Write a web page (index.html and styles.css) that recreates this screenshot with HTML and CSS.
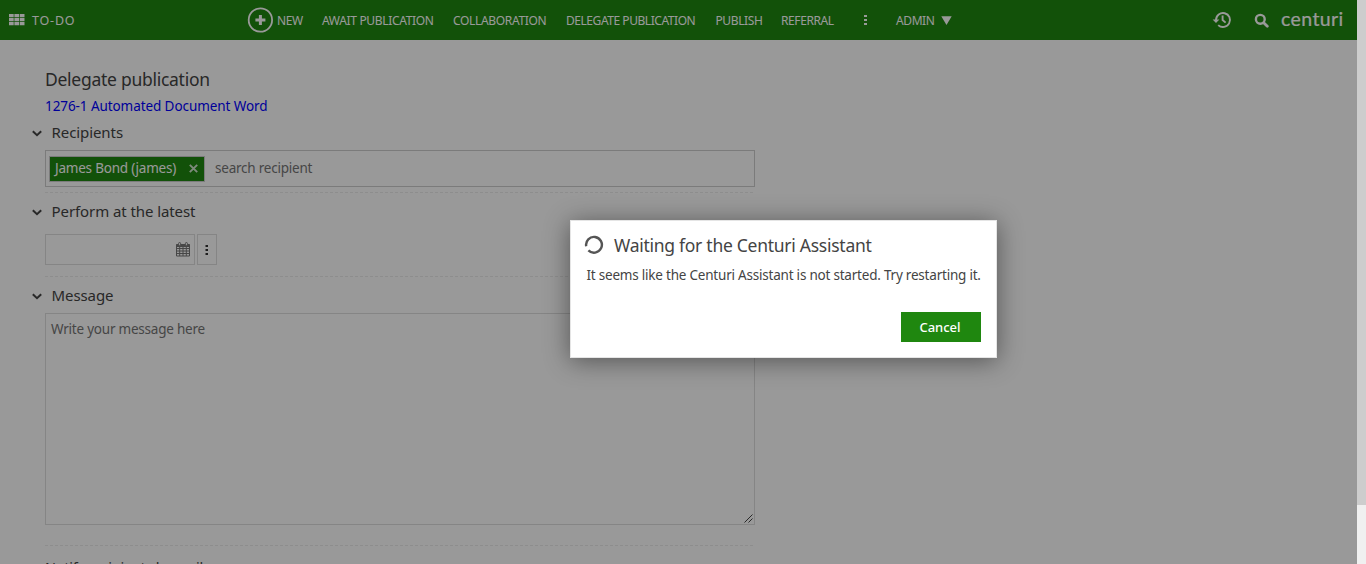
FILE: index.html
```
<!DOCTYPE html>
<html lang="en">
<head>
<meta charset="utf-8">
<title>Delegate publication</title>
<link rel="stylesheet" href="styles.css">
</head>
<body>
<div class="shell">
  <div class="page">
    <header class="topbar">
      <div class="home">
        <svg class="grid-icon" width="16" height="12" viewBox="0 0 16 12" fill="currentColor"><path d="M0 0h4.7v3.2H0zM5.4 0h4.7v3.2H5.4zM10.8 0h4.7v3.2h-4.7zM0 4h4.7v3.2H0zM5.4 4h4.7v3.2H5.4zM10.8 4h4.7v3.2h-4.7zM0 8h4.7v3.2H0zM5.4 8h4.7v3.2H5.4zM10.8 8h4.7v3.2h-4.7z"/></svg>
        <span class="home-label">TO-DO</span>
      </div>
      <nav class="nav">
        <a class="nav-new"><svg width="26" height="26" viewBox="0 0 26 26" fill="none" stroke="currentColor"><circle cx="13.4" cy="13" r="11.7" stroke-width="1.8"/><path d="M13.4 8v10M8.4 13h10" stroke-width="3"/></svg><span>NEW</span></a>
        <a class="w-await">AWAIT PUBLICATION</a>
        <a class="w-collab">COLLABORATION</a>
        <a class="w-delegate">DELEGATE PUBLICATION</a>
        <a class="w-publish">PUBLISH</a>
        <a class="w-referral">REFERRAL</a>
        <a class="w-more"><svg width="4" height="12" viewBox="0 0 4 12" fill="currentColor"><path d="M0 1h3v2H0zM0 5h3v2H0zM0 9h3v2H0z"/></svg></a>
        <a class="w-admin"><span>ADMIN</span><svg width="11" height="9" viewBox="0 0 11 9" fill="currentColor"><path d="M.3.3h10.4L5.5 9z"/></svg></a>
      </nav>
      <div class="tools">
        <svg width="20" height="18" viewBox="0 0 20 18" fill="none" stroke="currentColor" stroke-width="1.9"><path d="M4 9a7 7 0 1 1 2.2 5.1"/><path d="M10.6 4.5V9l3 2.6"/><path d="M.6 8.4h6.8L4 12z" fill="currentColor" stroke="none"/></svg>
        <svg class="search-icon" width="15" height="15" viewBox="0 0 15 15" fill="none" stroke="currentColor"><circle cx="6.3" cy="6.3" r="4.4" stroke-width="2.4"/><path d="M9.7 9.7l3.6 3.6" stroke-width="2.8" stroke-linecap="round"/></svg>
        <span class="brand">centuri</span>
      </div>
    </header>

    <main class="form">
      <h1 class="title">Delegate publication</h1>
      <a class="doc-link">1276-1 Automated Document Word</a>

      <h2 class="section s-recipients"><svg class="chev" width="10" height="7" viewBox="0 0 10 7"><path d="M.8 1.2L5 5.2l4.2-4"/></svg><span>Recipients</span></h2>
      <div class="recipients">
        <span class="chip"><span class="chip-name">James Bond (james)</span><svg width="9" height="9" viewBox="0 0 9 9" fill="none" stroke="currentColor" stroke-width="1.9"><path d="M.8.8l7.4 7.4M8.2.8L.8 8.2"/></svg></span>
        <span class="hint hint-search">search recipient</span>
      </div>
      <div class="rule r1"></div>

      <h2 class="section s-perform"><svg class="chev" width="10" height="7" viewBox="0 0 10 7"><path d="M.8 1.2L5 5.2l4.2-4"/></svg><span>Perform at the latest</span></h2>
      <div class="date-row">
        <div class="date"><svg width="14" height="15" viewBox="0 0 14 15" fill="none" stroke="currentColor"><path d="M.5 3h13v11H.5zM.5 6.5h13M.5 9h13M.5 11.5h13M3.7 5v9M7 5v9M10.3 5v9"/><path d="M.5 2.5h13v2H.5z" fill="currentColor"/><rect x="2.6" y=".5" width="2" height="3.3" rx="1" class="ring"/><rect x="9.4" y=".5" width="2" height="3.3" rx="1" class="ring"/></svg></div>
        <div class="more"><svg width="4" height="12" viewBox="0 0 4 12" fill="currentColor"><path d="M.5 1h2.5v2H.5zM.5 5h2.5v2H.5zM.5 9h2.5v2H.5z"/></svg></div>
      </div>
      <div class="rule r2"></div>

      <h2 class="section s-message"><svg class="chev" width="10" height="7" viewBox="0 0 10 7"><path d="M.8 1.2L5 5.2l4.2-4"/></svg><span>Message</span></h2>
      <div class="message"><span class="hint hint-message">Write your message here</span><svg class="grip" width="9" height="9" viewBox="0 0 9 9"><path d="M.5 8.5l8-8M4.5 8.5l4-4"/></svg></div>
      <div class="rule r3"></div>
      <h2 class="notify">Notify recipients by mail</h2>
    </main>
    <div class="overlay"></div>
  </div>
  <div class="scrollbar"><div class="thumb"></div></div>
</div>

<section class="dialog">
  <div class="dialog-head"><svg width="20" height="20" viewBox="0 0 20 20" fill="none"><path d="M2.2 11.2A7.9 7.9 0 1 1 4.4 15.4" class="spin"/></svg><h2>Waiting for the Centuri Assistant</h2></div>
  <p>It seems like the Centuri Assistant is not started. Try restarting it.</p>
  <div class="actions"><button>Cancel</button></div>
</section>
</body>
</html>
```
FILE: styles.css
```
* { box-sizing: border-box; }
body { margin: 0; height: 564px; overflow: hidden; background: #fff; color: #444; font-family: "Noto Sans", "Open Sans", sans-serif; font-size: 13.5px; }
h1, h2, p { margin: 0; font-weight: 400; white-space: nowrap; }
svg { display: block; flex: none; }
.shell { display: flex; height: 564px; }
.page { position: relative; width: 1357px; height: 564px; overflow: hidden; }
.overlay { position: absolute; inset: 0; background: rgba(0, 0, 0, .4); }
.scrollbar { width: 9px; background: #f0f0f0; }
.thumb { height: 505px; background: #cdcdcd; }

.topbar { display: flex; align-items: center; height: 40px; background: #1f870f; color: #fff; font-size: 12px; white-space: nowrap; }
.home { display: flex; align-items: center; gap: 7px; width: 238px; padding-left: 9px; }
.home-label { font-size: 12.5px; letter-spacing: .8px; }
.nav { display: flex; align-items: center; padding-left: 9px; letter-spacing: -.4px; }
.nav a { flex: none; }
.nav-new { display: flex; align-items: center; gap: 4px; width: 75px; }
.w-await { width: 131px; letter-spacing: -.33px; }
.w-collab { width: 113px; letter-spacing: -.33px; }
.w-delegate { width: 149.5px; letter-spacing: -.45px; }
.w-publish { width: 65.5px; }
.w-referral { width: 83px; }
.w-more { width: 32px; }
.w-admin { display: flex; align-items: center; gap: 6px; }
.tools { display: flex; align-items: center; margin-left: auto; padding-right: 14px; }
.search-icon { margin-left: 22px; }
.brand { margin: -2px 0 0 12px; width: 62px; font-family: Lato, sans-serif; font-size: 19.5px; letter-spacing: .4px; line-height: 24px; -webkit-text-stroke: .2px #fff; }

.form { padding: 27px 0 0 45px; }
.title { font-size: 17.5px; line-height: 24px; letter-spacing: -.27px; }
.doc-link { display: block; margin-top: 5px; line-height: 20px; letter-spacing: -.08px; color: #00f; }
.section { display: flex; align-items: center; gap: 9.5px; margin-left: -13px; height: 22px; font-size: 15px; letter-spacing: -.08px; }
.section span { margin-top: -2px; }
.chev { fill: none; stroke: #444; stroke-width: 2; }
.s-recipients { margin-top: 6px; }
.recipients { display: flex; align-items: center; width: 710px; height: 37px; margin-top: 6px; padding-left: 3px; border: 1px solid #cdcdcd; }
.chip { display: flex; align-items: center; justify-content: space-between; width: 156px; height: 26px; padding: 0 6px 0 5px; background: #1f870f; border: 1px solid #cdcdcd; color: #fff; white-space: nowrap; }
.chip-name { margin-top: -2px; letter-spacing: -.22px; }
.chip svg { opacity: .8; }
.hint { color: #757575; white-space: nowrap; letter-spacing: -.22px; }
.hint-search { margin: -2px 0 0 10px; }
.rule { width: 710px; height: 1px; background: repeating-linear-gradient(90deg, #ebebeb 0 3px, #fff 3px 5px); }
.r1 { margin-top: 5px; }
.s-perform { margin-top: 8px; }
.date-row { display: flex; gap: 2px; margin-top: 11px; }
.date { display: flex; align-items: center; justify-content: flex-end; width: 150px; height: 31px; padding-right: 4px; border: 1px solid #dedede; color: #777; }
.ring { fill: #fff; stroke: #777; }
.more { display: flex; align-items: center; justify-content: center; width: 20px; border: 1px solid #dedede; color: #333; }
.r2 { margin-top: 11px; }
.s-message { margin-top: 8px; }
.message { display: flex; justify-content: space-between; width: 710px; height: 212px; margin-top: 6px; padding: 5px 1px 1px 5px; border: 1px solid #dedede; line-height: 20px; }
.grip { align-self: flex-end; fill: none; stroke: #444; stroke-width: 1; }
.r3 { margin-top: 20px; }
.notify { margin-top: 10px; font-size: 14.5px; line-height: 22px; letter-spacing: -.25px; }

.dialog { position: absolute; left: 570px; top: 220px; width: 427px; height: 138px; padding: 14px 15px 15px 13px; background: #fff; border: 1px solid #e5e5e5; box-shadow: 0 3px 24px rgba(0, 0, 0, .45); color: #444; }
.dialog-head { display: flex; align-items: center; gap: 10px; height: 20px; }
.dialog-head h2 { font-size: 17.5px; letter-spacing: -.27px; }
.spin { stroke: #555; stroke-width: 2.4; }
.dialog p { margin: 10px 0 0 2.5px; font-size: 13.5px; line-height: 20px; letter-spacing: -.215px; }
.actions { display: flex; justify-content: flex-end; margin-top: 27px; }
button { width: 80px; height: 30px; padding: 0 2px 0 0; border: 0; background: #1f870f; color: #fff; font: 500 13px "Noto Sans", "Open Sans", sans-serif; }
```
